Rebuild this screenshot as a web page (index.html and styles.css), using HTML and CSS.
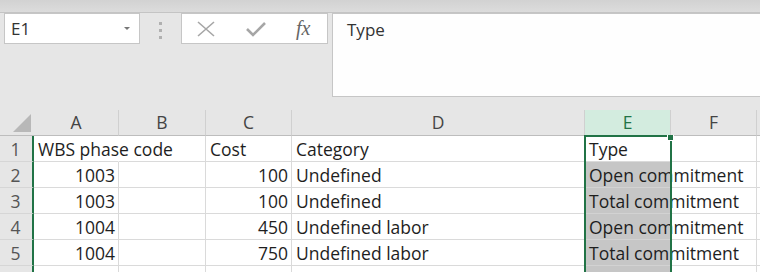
FILE: index.html
```html
<!DOCTYPE html>
<html lang="en">
<head>
  <meta charset="UTF-8" />
  <title>Sheet</title>
  <link rel="stylesheet" href="styles.css">
</head>
<body>

  <div class="titlebar"></div>

  <div class="toolbar">
    <div class="namebox">
      <span>E1</span>
      <span class="caret"></span>
    </div>
    <div class="grip">
      <span></span><span></span><span></span>
    </div>
    <div class="fxbox">
      <svg class="icon" width="20" height="16" viewBox="0 0 20 16">
        <path d="M2 1 L18 15 M18 1 L2 15" stroke="#a6a6a6" stroke-width="1.6" fill="none" />
      </svg>
      <svg class="icon" width="20" height="16" viewBox="0 0 20 16">
        <path d="M1 8 L7 14 L19 2" stroke="#a6a6a6" stroke-width="2.6" fill="none" />
      </svg>
      <span class="fx">fx</span>
    </div>
    <div class="formula">Type</div>
  </div>

  <div class="sheet">
    <div class="corner"><span class="tri"></span></div>
    <div class="colhead">A</div>
    <div class="colhead">B</div>
    <div class="colhead">C</div>
    <div class="colhead">D</div>
    <div class="colhead active">E</div>
    <div class="colhead">F</div>
    <div class="colhead"></div>

    <div class="rowhead">1</div>
    <div class="cell spill">WBS phase code</div>
    <div class="cell"></div>
    <div class="cell">Cost</div>
    <div class="cell">Category</div>
    <div class="cell">Type</div>
    <div class="cell"></div>
    <div class="cell"></div>

    <div class="rowhead">2</div>
    <div class="cell num">1003</div>
    <div class="cell"></div>
    <div class="cell num">100</div>
    <div class="cell">Undefined</div>
    <div class="cell hl spill">Open commitment</div>
    <div class="cell"></div>
    <div class="cell"></div>

    <div class="rowhead">3</div>
    <div class="cell num">1003</div>
    <div class="cell"></div>
    <div class="cell num">100</div>
    <div class="cell">Undefined</div>
    <div class="cell hl spill">Total commitment</div>
    <div class="cell"></div>
    <div class="cell"></div>

    <div class="rowhead">4</div>
    <div class="cell num">1004</div>
    <div class="cell"></div>
    <div class="cell num">450</div>
    <div class="cell">Undefined labor</div>
    <div class="cell hl spill">Open commitment</div>
    <div class="cell"></div>
    <div class="cell"></div>

    <div class="rowhead">5</div>
    <div class="cell num">1004</div>
    <div class="cell"></div>
    <div class="cell num">750</div>
    <div class="cell">Undefined labor</div>
    <div class="cell hl spill">Total commitment</div>
    <div class="cell"></div>
    <div class="cell"></div>

    <div class="rowhead"></div>
    <div class="cell"></div>
    <div class="cell"></div>
    <div class="cell"></div>
    <div class="cell"></div>
    <div class="cell hl"></div>
    <div class="cell"></div>
    <div class="cell"></div>

    <div class="selection"><span class="handle"></span></div>
  </div>

</body>
</html>
```

FILE: styles.css
```css
html, body {
  margin: 0;
  padding: 0;
  height: 100%;
  overflow: hidden;
  background: #fff;
  font-family: "Open Sans", sans-serif;
  color: #1e1e1e;
}

.titlebar {
  height: 12px;
  background: linear-gradient(#d2d2d2, #dcdcdc);
  border-bottom: 1px solid #c4c4c4;
}

.toolbar {
  display: flex;
  align-items: flex-start;
  height: 97px;
  background: #e6e6e6;
}

.namebox {
  box-sizing: border-box;
  display: flex;
  align-items: center;
  justify-content: space-between;
  width: 136px;
  height: 31px;
  margin-left: 4px;
  padding: 0 9px 0 6px;
  background: #fff;
  border: 1px solid #c6c6c6;
  font-size: 17px;
  color: #333;
}

.caret {
  width: 0;
  height: 0;
  border-left: 3px solid transparent;
  border-right: 3px solid transparent;
  border-top: 3px solid #777;
}

.grip {
  display: flex;
  flex-direction: column;
  align-items: center;
  gap: 4px;
  width: 41px;
  padding-top: 9px;
}

.grip span {
  width: 3px;
  height: 3px;
  background: #b0b0b0;
}

.fxbox {
  box-sizing: border-box;
  display: flex;
  align-items: center;
  width: 147px;
  height: 31px;
  padding-left: 14px;
  gap: 30px;
  background: #fff;
  border: 1px solid #c6c6c6;
}

.fx {
  font-family: "Liberation Serif", serif;
  font-style: italic;
  font-size: 20px;
  color: #666;
}

.formula {
  box-sizing: border-box;
  flex: 1;
  height: 84px;
  margin-left: 4px;
  padding: 4px 14px;
  background: #fefefe;
  border-left: 1px solid #c6c6c6;
  border-bottom: 1px solid #c6c6c6;
  border-top: 1px solid #c6c6c6;
  font-size: 17px;
  color: #333;
}

.sheet {
  position: relative;
  display: grid;
  grid-template-columns: 34px 85px 87px 86px 293px 86px 86px 1fr;
  grid-auto-rows: 26px;
}

.corner,
.colhead,
.rowhead {
  box-sizing: border-box;
  background: #e6e6e6;
  color: #444;
  font-size: 17.5px;
  text-align: center;
  line-height: 25px;
}

.corner {
  position: relative;
  border-bottom: 1px solid #bdbdbd;
}

.tri {
  position: absolute;
  right: 3px;
  bottom: 3px;
  width: 0;
  height: 0;
  border-left: 18px solid transparent;
  border-bottom: 18px solid #b8b8b8;
}

.colhead {
  border-right: 1px solid #d0d0d0;
  border-bottom: 1px solid #bdbdbd;
}

.colhead.active {
  background: #d3ecdf;
  color: #217346;
}

.rowhead {
  border-right: 2px solid #217346;
  border-bottom: 1px solid #d6d6d6;
  color: #555;
  line-height: 26px;
  padding-right: 1px;
}

.cell {
  box-sizing: border-box;
  border-right: 1px solid #dadada;
  border-bottom: 1px solid #dadada;
  padding: 0 3px 0 4px;
  font-size: 17.5px;
  line-height: 26px;
  white-space: nowrap;
}

.cell.spill {
  border-right-color: transparent;
}

.cell.num {
  text-align: right;
}

.cell.hl {
  background: #c6c6c6;
  border-bottom-color: #d2d2d2;
}

.selection {
  position: absolute;
  left: 584px;
  top: 25px;
  width: 88px;
  height: 200px;
  box-sizing: border-box;
  border: 2px solid #217346;
  border-bottom: none;
  pointer-events: none;
}

.handle {
  position: absolute;
  right: -4px;
  top: -2px;
  width: 5px;
  height: 5px;
  background: #217346;
  border: 1px solid #fff;
  border-top: none;
}
```
